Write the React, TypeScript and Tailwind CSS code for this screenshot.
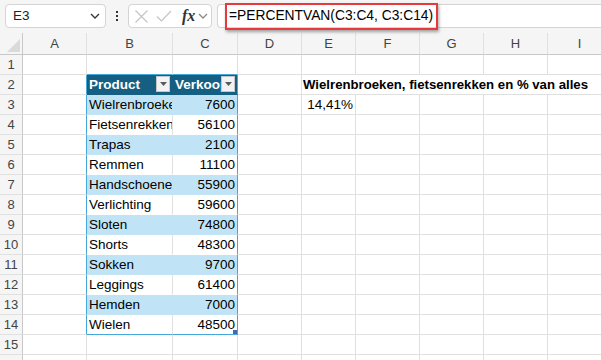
import React from "react"

const COLS = ["A", "B", "C", "D", "E", "F", "G", "H", "I"]

const ROWS: [string, number][] = [
  ["Wielrenbroeken", 7600],
  ["Fietsenrekken", 56100],
  ["Trapas", 2100],
  ["Remmen", 11100],
  ["Handschoenen", 55900],
  ["Verlichting", 59600],
  ["Sloten", 74800],
  ["Shorts", 48300],
  ["Sokken", 9700],
  ["Leggings", 61400],
  ["Hemden", 7000],
  ["Wielen", 48500],
]

const GRID = "grid grid-cols-[23px_64px_86px_65px_64px_54px_64px_64px_64px_64px]"

function Chevron({ className }: { className?: string }) {
  return (
    <svg width="10" height="6" viewBox="0 0 10 6" className={className}>
      <polyline points="1,1 5,5 9,1" fill="none" stroke="currentColor" strokeWidth="1.3" />
    </svg>
  )
}

function FilterButton() {
  return (
    <span className="absolute right-[2px] top-[1px] flex h-[16px] w-[14px] items-center justify-center border border-[#c6c6c6] bg-[#f3f3f3]">
      <svg width="7" height="4" viewBox="0 0 7 4">
        <polygon points="0,0 7,0 3.5,4" fill="#5a5a5a" />
      </svg>
    </span>
  )
}

function Toolbar() {
  return (
    <div className="flex h-[33px] items-start bg-[#f5f5f5] pl-[5px] pt-[4px]">
      <div className="flex h-[24px] w-[101px] items-center justify-between rounded-[4px] border border-[#d4d4d4] bg-white pl-[7px] pr-[5px] text-[13.5px] text-[#222]">
        <span>E3</span>
        <Chevron className="text-[#333]" />
      </div>
      <div className="flex h-[24px] w-[22px] flex-col items-center justify-center gap-[2px]">
        <span className="h-[2px] w-[2px] bg-[#333]" />
        <span className="h-[2px] w-[2px] bg-[#333]" />
        <span className="h-[2px] w-[2px] bg-[#333]" />
      </div>
      <div className="flex h-[24px] w-[84px] items-center rounded-[4px] border border-[#d4d4d4] bg-white pl-[5px]">
        <svg width="15" height="15" viewBox="0 0 15 15">
          <path d="M1.5 1.5 L13.5 13.5 M13.5 1.5 L1.5 13.5" stroke="#c4c4c4" strokeWidth="1.2" fill="none" />
        </svg>
        <svg width="16" height="14" viewBox="0 0 16 14" className="ml-[7px]">
          <polyline points="1,7.5 5.5,12 15,2" stroke="#c4c4c4" strokeWidth="1.2" fill="none" />
        </svg>
        <span className="ml-[10px] font-['Liberation_Serif',serif] text-[16px] font-bold italic leading-none text-[#333]">
          fx
        </span>
        <Chevron className="ml-[3px] text-[#8a8a8a]" />
      </div>
      <div className="relative ml-[5px] flex h-[24px] flex-1 items-center rounded-l-[4px] border border-r-0 border-[#d4d4d4] bg-white pl-[11px] text-[13.8px] text-black">
        =PERCENTVAN(C3:C4, C3:C14)
        <span className="absolute left-[7px] top-[-2px] h-[27px] w-[213px] border-[2.5px] border-[#e8393c] shadow-[1px_2px_3px_rgba(0,0,0,0.35)]" />
      </div>
    </div>
  )
}

function HeaderRow() {
  return (
    <div className={`${GRID} h-[22px] bg-[#f5f5f5]`}>
      <div className="relative border-r border-b border-[#c8c8c8]">
        <svg width="22" height="21" viewBox="0 0 22 21" className="absolute left-0 top-0">
          <polygon points="20,6 20,19 7,19" fill="#dadada" />
        </svg>
      </div>
      {COLS.map((c) => (
        <div
          key={c}
          className="flex items-center justify-center border-r border-b border-r-[#e0e0e0] border-b-[#c8c8c8] text-[13px] text-[#444]"
        >
          {c}
        </div>
      ))}
    </div>
  )
}

function SheetRow({ n }: { n: number }) {
  const inTable = n >= 2 && n <= 14
  const dataIdx = n - 3
  const data = n >= 3 && n <= 14 ? ROWS[dataIdx] : null
  const banded = data !== null && dataIdx % 2 === 0

  const rowFill = n === 2 ? "bg-[#156082]" : banded ? "bg-[#c0e4f5]" : "bg-white"

  const bBorderB =
    n === 1 || n === 14 ? "border-b-[#44a8dc]" : inTable ? "border-b-transparent" : "border-b-[#e0e0e0]"
  const bBorderR = inTable && (n === 2 || banded) ? "border-r-transparent" : "border-r-[#e0e0e0]"

  return (
    <div className={`${GRID} h-[20px] text-[13.5px] leading-[19px] text-black`}>
      <div className="border-r border-b border-r-[#c8c8c8] border-b-[#e0e0e0] bg-[#f5f5f5] pt-[1px] text-center text-[13px] leading-[18px] text-[#444]">
        {n}
      </div>
      {/* A */}
      <div
        className={`border-r border-b border-b-[#e0e0e0] ${inTable ? "border-r-[#44a8dc]" : "border-r-[#e0e0e0]"}`}
      />
      {/* B */}
      <div
        className={`relative overflow-hidden whitespace-nowrap border-r border-b pl-[2px] ${bBorderB} ${bBorderR} ${inTable ? rowFill : ""} ${n === 2 ? "font-bold text-white" : ""}`}
      >
        {n === 2 && (
          <>
            Product
            <FilterButton />
          </>
        )}
        {data && data[0]}
      </div>
      {/* C */}
      <div
        className={`relative overflow-hidden whitespace-nowrap border-r border-b ${bBorderB} ${inTable ? "border-r-[#44a8dc]" : "border-r-[#e0e0e0]"} ${inTable ? rowFill : ""} ${n === 2 ? "pl-[2px] font-bold text-white" : "pr-[2px] text-right"}`}
      >
        {n === 2 && (
          <>
            Verkoop
            <FilterButton />
          </>
        )}
        {data && data[1]}
        {n === 14 && <span className="absolute bottom-0 right-0 h-[4px] w-[4px] bg-[#4766b3]" />}
      </div>
      {/* D */}
      <div className="border-r border-b border-[#e0e0e0]" />
      {n === 2 ? (
        <div className="col-span-5 whitespace-nowrap border-b border-[#e0e0e0] pl-[1px] text-[13.2px] font-bold">
          Wielrenbroeken, fietsenrekken en % van alles
        </div>
      ) : (
        <>
          <div className="border-r border-b border-[#e0e0e0] pr-[2px] text-right">{n === 3 ? "14,41%" : ""}</div>
          <div className="border-r border-b border-[#e0e0e0]" />
          <div className="border-r border-b border-[#e0e0e0]" />
          <div className="border-r border-b border-[#e0e0e0]" />
          <div className="border-r border-b border-[#e0e0e0]" />
        </>
      )}
    </div>
  )
}

export default function App() {
  return (
    <div className="h-[360px] w-[601px] overflow-hidden bg-white font-['Liberation_Sans',Arial,sans-serif]">
      <Toolbar />
      <HeaderRow />
      {Array.from({ length: 16 }, (_, i) => (
        <SheetRow key={i} n={i + 1} />
      ))}
    </div>
  )
}
